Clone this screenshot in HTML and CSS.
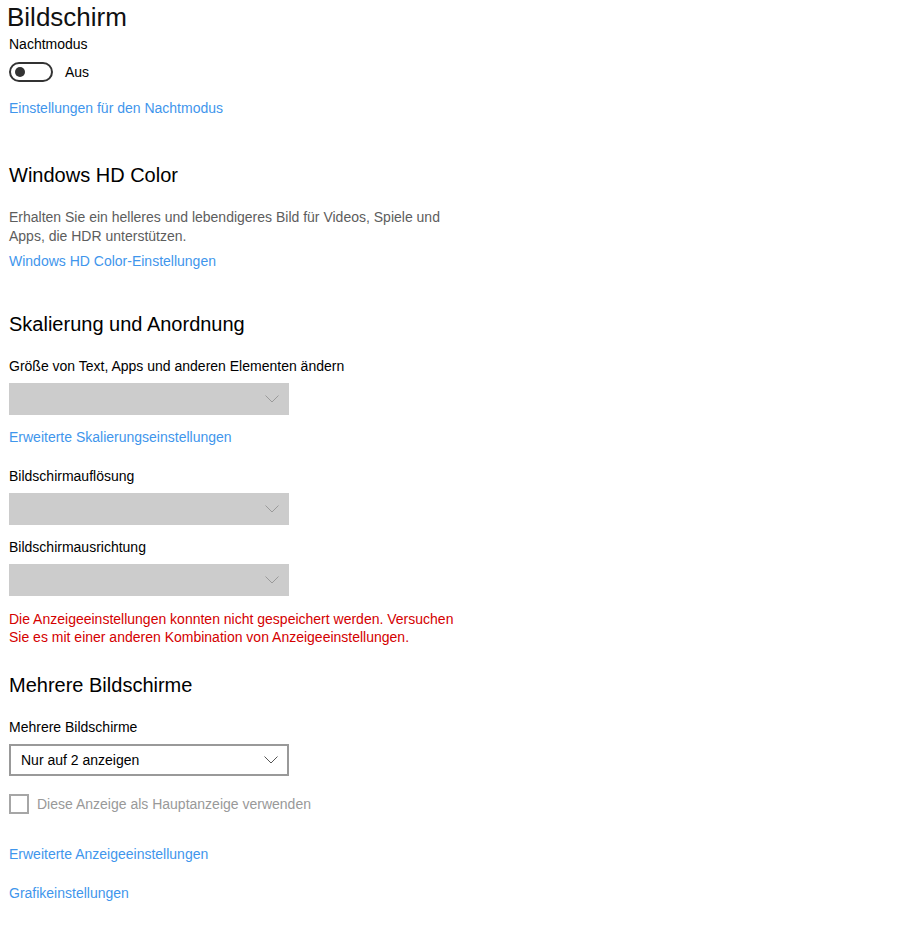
FILE: index.html
```html
<!DOCTYPE html>
<html>
<head>
<title>Bildschirm</title>
<link rel="stylesheet" href="styles.css">
</head>
<body>

<header class="page-title">Bildschirm</header>

<main class="content">

  <div class="label label-clipped">Nachtmodus</div>
  <div class="toggle-row">
    <span class="toggle"><span class="toggle-knob"></span></span>
    <span class="toggle-text">Aus</span>
  </div>
  <a class="link link-night" href="#">Einstellungen für den Nachtmodus</a>

  <h2 class="section-title section-first">Windows HD Color</h2>
  <p class="description">Erhalten Sie ein helleres und lebendigeres Bild für Videos, Spiele und Apps, die HDR unterstützen.</p>
  <a class="link link-tight" href="#">Windows HD Color-Einstellungen</a>

  <h2 class="section-title section-second">Skalierung und Anordnung</h2>
  <div class="label label-after-title">Größe von Text, Apps und anderen Elementen ändern</div>
  <div class="combo combo-disabled">
    <svg class="chevron" width="14" height="8" viewBox="0 0 14 8"><path d="M0.5 0.5 L7 7 L13.5 0.5" fill="none" stroke="currentColor" stroke-width="1"/></svg>
  </div>
  <a class="link link-after-combo" href="#">Erweiterte Skalierungseinstellungen</a>

  <div class="label label-after-link">Bildschirmauflösung</div>
  <div class="combo combo-disabled">
    <svg class="chevron" width="14" height="8" viewBox="0 0 14 8"><path d="M0.5 0.5 L7 7 L13.5 0.5" fill="none" stroke="currentColor" stroke-width="1"/></svg>
  </div>

  <div class="label label-after-combo">Bildschirmausrichtung</div>
  <div class="combo combo-disabled">
    <svg class="chevron" width="14" height="8" viewBox="0 0 14 8"><path d="M0.5 0.5 L7 7 L13.5 0.5" fill="none" stroke="currentColor" stroke-width="1"/></svg>
  </div>

  <p class="error">Die Anzeigeeinstellungen konnten nicht gespeichert werden. Versuchen Sie es mit einer anderen Kombination von Anzeigeeinstellungen.</p>

  <h2 class="section-title section-third">Mehrere Bildschirme</h2>
  <div class="label label-after-title">Mehrere Bildschirme</div>
  <div class="combo combo-active">
    <span class="combo-value">Nur auf 2 anzeigen</span>
    <svg class="chevron" width="14" height="8" viewBox="0 0 14 8"><path d="M0.5 0.5 L7 7 L13.5 0.5" fill="none" stroke="currentColor" stroke-width="1"/></svg>
  </div>

  <div class="check-row">
    <span class="checkbox"></span>
    <span class="check-text">Diese Anzeige als Hauptanzeige verwenden</span>
  </div>

  <a class="link link-advanced" href="#">Erweiterte Anzeigeeinstellungen</a>
  <a class="link link-graphics" href="#">Grafikeinstellungen</a>

</main>

</body>
</html>
```

FILE: styles.css
```css
body { margin: 0; background-color: #fff; color: #000; font-family: 'Liberation Sans', Arial, sans-serif; font-size: 14px; overflow: hidden; }

.page-title { height: 35px; padding-left: 7px; font-size: 26px; line-height: 34px; font-weight: 300; color: #111; background-color: #fff; position: relative; z-index: 1; }
.content { padding-left: 9px; height: 901px; overflow: hidden; }

.label { line-height: 20px; }
.label-clipped { margin-top: -1px; }
.label-after-title { margin-top: 18px; }
.label-after-link { margin-top: 19px; }
.label-after-combo { margin-top: 12px; }

/* Toggle switch */
.toggle-row { display: flex; align-items: center; gap: 12px; margin-top: 8px; height: 20px; }
.toggle { box-sizing: border-box; width: 44px; height: 20px; border: 2px solid #333; border-radius: 10px; display: flex; align-items: center; padding-left: 4px; }
.toggle-knob { width: 10px; height: 10px; border-radius: 50%; background-color: #333; }

.link { display: block; width: max-content; color: #3f96ec; text-decoration: none; line-height: 20px; }
.link-night { margin-top: 16px; }
.link-tight { margin-top: 5px; }
.link-after-combo { margin-top: 12px; }
.link-advanced { margin-top: 30px; }
.link-graphics { margin-top: 19px; }

.section-title { margin: 0; font-size: 20px; font-weight: normal; line-height: 28px; }
.section-first { margin-top: 43px; }
.section-second { margin-top: 39px; }
.section-third { margin-top: 25px; }

.description { margin: 19px 0 0; width: 440px; color: #5d5d5d; line-height: 19px; }

/* Combo boxes */
.combo { box-sizing: border-box; width: 280px; height: 32px; margin-top: 7px; display: flex; align-items: center; justify-content: space-between; padding: 0 9px 0 10px; }
.combo-disabled { background-color: #ccc; justify-content: flex-end; color: #9a9a9a; padding-right: 10px; }
.combo-active { border: 2px solid #999; color: #555; }
.combo-value { color: #000; }
.chevron { display: block; }

.error { margin: 14px 0 0; width: 450px; color: #d40000; line-height: 18px; }

/* Checkbox */
.check-row { display: flex; align-items: center; gap: 8px; margin-top: 18px; height: 20px; }
.checkbox { box-sizing: border-box; width: 20px; height: 20px; border: 2px solid #a6a6a6; }
.check-text { color: #999; }
```
